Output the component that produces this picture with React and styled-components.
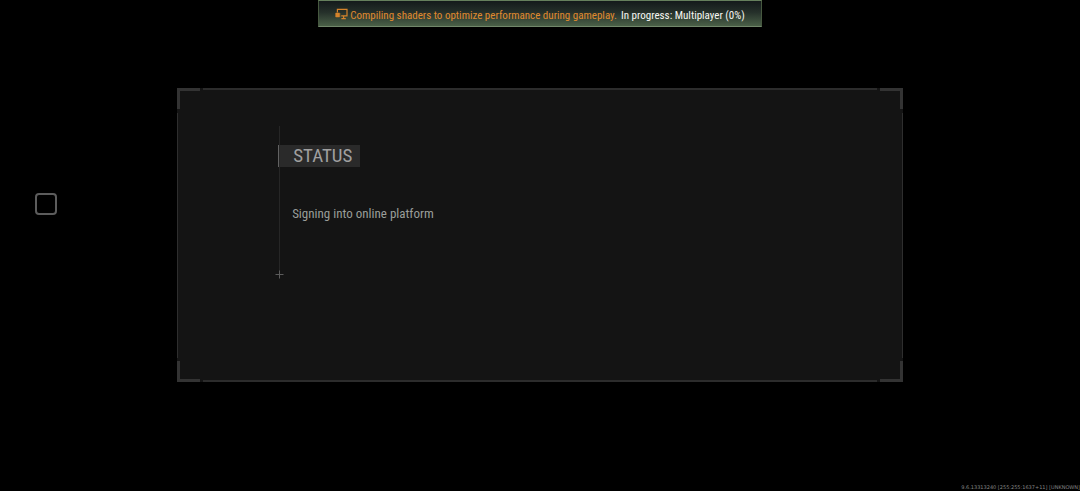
import React from "react";
import styled, { createGlobalStyle } from "styled-components";

const App = () => {
  return (
    <>
      <GlobalStyle />
      <Screen>
        <Banner role="status">
          <ShaderIcon />
          <p>
            <Notice>Compiling shaders to optimize performance during gameplay.</Notice>
            In progress: Multiplayer (0%)
          </p>
        </Banner>
        <Main>
          <Side>
            <SquareButton type="button" aria-label="Menu" />
          </Side>
          <Panel>
            <Frame />
            <Content>
              <Title>STATUS</Title>
              <Message>Signing into online platform</Message>
              <Cross viewBox="0 0 9 9" aria-hidden="true">
                <path d="M4.5 0.5v8M0.5 4.5h8" />
              </Cross>
            </Content>
          </Panel>
        </Main>
        <Version>9.6.13313240 [255:255:1637+11] [UNKNOWN]</Version>
      </Screen>
    </>
  );
};

export default App;

const ShaderIcon = () => (
  <Icon viewBox="0 0 13 12" aria-hidden="true">
    <path d="M2.4 4.5V1.4h9.6v6.4H6.2M8.6 7.8v2.6M6.4 10.6h4.4" />
    <path className="solid" d="M0.8 4.8h3.8v4.4H0.8z M0 5.6h5.4v0.9H0z M0 7.6h5.4v0.9H0z" />
  </Icon>
);

const Frame = () => (
  <>
    <Edge $side="top" />
    <Edge $side="bottom" />
    <Rail $side="left" />
    <Rail $side="right" />
    <Corner $y="top" $x="left" />
    <Corner $y="top" $x="right" />
    <Corner $y="bottom" $x="left" />
    <Corner $y="bottom" $x="right" />
  </>
);

const GlobalStyle = createGlobalStyle`
  * {
    box-sizing: border-box;
  }
  body {
    margin: 0;
    background-color: #000000;
    font-family: "Roboto Condensed", Roboto, "Liberation Sans", sans-serif;
  }
  h1, p {
    margin: 0;
    font-weight: 400;
  }
`;

const Screen = styled.div`
  min-height: 100vh;
  display: flex;
  flex-direction: column;
`;

const Banner = styled.header`
  align-self: center;
  display: flex;
  align-items: center;
  gap: 2px;
  padding: 8px 16px 4px;
  border: 1px solid #46583f;
  border-top-color: #66805d;
  border-bottom-color: #71876a;
  background-image: linear-gradient(#141a1b, #25302a 45%, #4a6047);
  color: #f6f6f2;
  font-size: 11px;
  line-height: 13px;
  white-space: nowrap;
`;

const Notice = styled.span`
  margin-right: 4px;
  color: #e08a2e;
`;

const Icon = styled.svg`
  width: 13px;
  height: 12px;
  margin-top: -3px;
  fill: none;
  stroke: #d5832b;
  stroke-width: 1.2;

  .solid {
    fill: #d5832b;
    stroke: none;
  }
`;

const Main = styled.main`
  flex: 1;
  display: grid;
  grid-template-columns: 1fr 67.2vw 1fr;
  align-items: start;
  padding-top: 61px;
`;

const Side = styled.div`
  padding: 105px 0 0 35px;
`;

const SquareButton = styled.button`
  display: block;
  width: 22px;
  height: 22px;
  padding: 0;
  border: 2px solid #5c5c5c;
  border-radius: 4px;
  background: none;
`;

const Panel = styled.section`
  position: relative;
  padding: 38px 101px 103px;
  background-color: #141414;
`;

const Edge = styled.span`
  position: absolute;
  ${({ $side }) => $side}: 0;
  left: 26px;
  right: 26px;
  height: 2px;
  background-color: #2c2c2c;
`;

const Rail = styled.span`
  position: absolute;
  ${({ $side }) => $side}: 0;
  top: 25px;
  bottom: 24px;
  width: 1px;
  background-color: #2e2e2e;
`;

const Corner = styled.span`
  position: absolute;
  ${({ $x }) => $x}: 0;
  ${({ $y }) => $y}: 0;
  width: 23px;
  height: 21px;
  border: 0 solid #333333;
  border-${({ $x }) => $x}-width: 3px;
  border-${({ $y }) => $y}-width: 3px;
`;

const Content = styled.div`
  position: relative;
  display: flex;
  flex-direction: column;
  align-items: flex-start;
  padding: 19px 0 56px;

  &::before {
    content: "";
    position: absolute;
    top: 0;
    bottom: 8px;
    left: 1px;
    width: 1px;
    background-color: #262626;
  }
`;

const Title = styled.h1`
  padding: 0 8px 0 13px;
  border-left: 2px solid #626262;
  background-color: #2a2a2a;
  color: #a0a0a0;
  font-size: 19px;
  line-height: 22px;
`;

const Message = styled.p`
  padding: 38px 0 0 14px;
  color: #9a9e9a;
  font-size: 13px;
  line-height: 18px;
`;

const Cross = styled.svg`
  position: absolute;
  left: -3px;
  bottom: 0;
  width: 9px;
  height: 9px;
  fill: none;
  stroke: #5c5c5c;
`;

const Version = styled.footer`
  align-self: flex-end;
  color: #858585;
  font-family: "DejaVu Sans", sans-serif;
  font-size: 5px;
  line-height: 7px;
`;
